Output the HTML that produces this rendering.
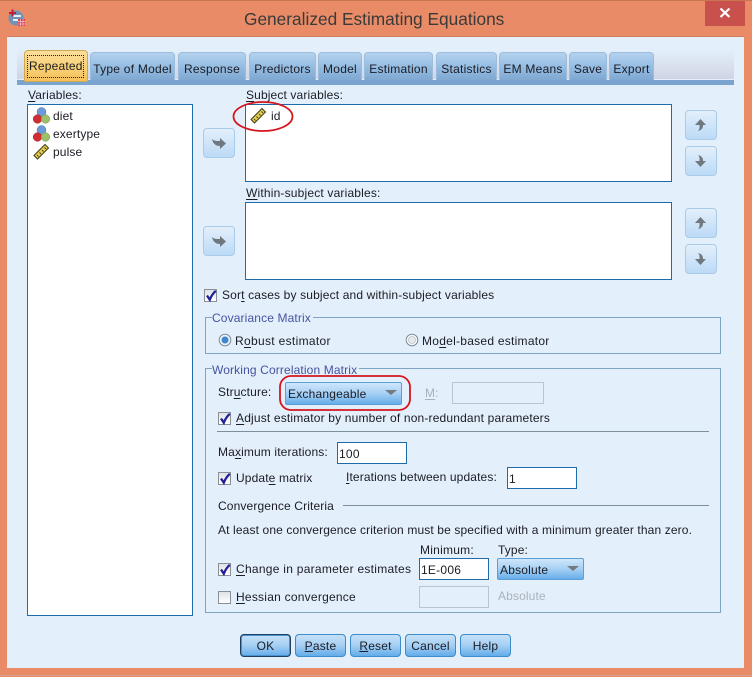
<!DOCTYPE html>
<html><head><meta charset="utf-8"><style>
html,body{margin:0;padding:0;width:752px;height:677px;overflow:hidden;background:#e98b66}
body{position:relative;font:12px/16px "Liberation Sans",Arial,sans-serif;color:#1c1c24}
.a,.t,.box,.btn,.tab,.cb,.in,.gb,.ln,.combo{position:absolute;box-sizing:border-box}
.t{white-space:nowrap;letter-spacing:.13px}
.t u{text-underline-offset:2px}
.box{background:#fff;border:1px solid #1f6aa8}
.in{background:#fff;border:1px solid #1f6aa8;padding:3px 0 0 1px;font-size:12px;line-height:16px;letter-spacing:.25px}
.in.d{border-color:#b8c6d2;background:#e3effb}
.tab{top:52px;height:28px;border:1px solid #9dbddc;border-bottom:0;border-radius:4px 4px 0 0;background:linear-gradient(#b4d2ef,#93bbe1 55%,#7fa8d2);text-align:center;padding-top:8px;white-space:nowrap;letter-spacing:.25px}
.btn{width:32px;height:30px;border:1px solid #a9cbea;border-radius:4px;background:linear-gradient(#e3effb,#bcdaf6)}
.btn svg{position:absolute;left:-1px;top:-1px}
.cb{width:13px;height:13px;border:1px solid #8a8f96;background:linear-gradient(#dfe2e6,#fff)}
.cb svg{position:absolute;left:0;top:0;overflow:visible}
.gb{border:1px solid #7ea6c2;left:205px;width:516px}
.ln{height:1px;background:#7d8f9c}
.lg{color:#46539f}
.combo{border:1px solid #5b9fd8;border-radius:2px;background:linear-gradient(#cfe6fb,#a6d0f4 50%,#66aeea);padding:3px 0 0 2px;letter-spacing:.2px}
.combo i{position:absolute;width:0;height:0;border:6px solid transparent;border-top:5px solid #757a7e;border-bottom:0;top:7px}
.pb{top:634px;height:23px;width:51px;border:1px solid #3c8bcb;border-radius:4px;background:linear-gradient(#c6e1f9,#a5cff3 50%,#62ace9);text-align:center;padding-top:3px;position:absolute;box-sizing:border-box;letter-spacing:.2px}
</style></head><body>

<div class="a" style="left:0;top:0;width:752px;height:1px;background:#c8764f"></div>

<svg class="a" style="left:8px;top:9px" width="18" height="18" viewBox="0 0 18 18">
<circle cx="8" cy="9" r="7.500" fill="#6f93b8"/><path d="M5 6h8v2H5zM5 10h5v2H5z" fill="#e6eef6"/>
<rect x="10" y="10" width="7" height="7" fill="#d84052"/><path d="M10 12.500h7M10 15h7M12.500 10v7M15 10v7" stroke="#f3c6c8" stroke-width=".7"/>
<path d="M1 4h7M4.500 .500v7" stroke="#c11f33" stroke-width="2"/></svg>

<div class="t" style="left:244px;top:7px;font-size:17.3px;line-height:24px;color:#3a3a3a;letter-spacing:0">Generalized Estimating Equations</div>
<div class="a" style="left:705px;top:1px;width:40px;height:25px;background:#c8504d"></div>
<svg class="a" style="left:719px;top:7px" width="13" height="12"><path d="M1.500 1.500l9 8.500M10.500 1.500l-9 8.500" stroke="#fff" stroke-width="2.200"/></svg>

<!-- client -->
<div class="a" style="left:7px;top:36px;width:737px;height:632px;background:#e3effb;border-top:1px solid #d07f5e"></div>
<div class="a" style="left:0;top:675px;width:752px;height:1px;background:#d4a58c"></div>

<!-- tab band -->
<div class="a" style="left:17px;top:50px;width:717px;height:29px;background:linear-gradient(#e3effb,#d0d4e4)"></div>
<div class="a" style="left:17px;top:80px;width:717px;height:5px;background:#7ba3cf"></div>

<div class="tab" style="left:90px;width:85px">Type of Model</div>
<div class="tab" style="left:178px;width:68px">Response</div>
<div class="tab" style="left:249px;width:67px">Predictors</div>
<div class="tab" style="left:318px;width:44px">Model</div>
<div class="tab" style="left:364px;width:69px">Estimation</div>
<div class="tab" style="left:436px;width:61px">Statistics</div>
<div class="tab" style="left:499px;width:68px">EM Means</div>
<div class="tab" style="left:569px;width:38px">Save</div>
<div class="tab" style="left:609px;width:45px">Export</div>
<div class="a" style="left:24px;top:50px;width:64px;height:32px;border:1px solid #cfa951;border-radius:4px 4px 0 0;background:linear-gradient(#fbdf9b,#f8cf73 60%,#f5c05a)"></div>
<div class="a" style="left:27px;top:55px;width:57px;height:23px;border:1px dotted #222"></div>
<div class="t" style="left:29px;top:58px;letter-spacing:.2px">Repeated</div>

<!-- variables -->
<div class="t" style="left:28px;top:87px"><u>V</u>ariables:</div>
<div class="box" style="left:27px;top:104px;width:166px;height:512px"></div>

<svg width="0" height="0" style="position:absolute"><defs>
<g id="nom"><circle cx="8.500" cy="5" r="4.500" fill="#6b9ad8" stroke="#4a76b0" stroke-width=".5"/><circle cx="4.500" cy="12" r="4.300" fill="#cf2f33" stroke="#9c2024" stroke-width=".5"/><circle cx="12.500" cy="12" r="4.300" fill="#9cc06a" stroke="#78984c" stroke-width=".5"/></g>
<g id="rul"><path d="M1 12.500L12 1.500l3.500 3.500L4.500 16z" fill="#e8cf4a" stroke="#3c3a20" stroke-width="1"/><path d="M4 12l1.500 1.500M6.500 9.500L8 11M9 7l1.500 1.500M11.500 4.500L13 6" stroke="#3c3a20" stroke-width=".9"/></g>
<path id="ar" d="M9 11C11 13 13 13 17 13V10L23 15.500 17 21V18C13 18 10 16 9 11Z" fill="#6f787f"/>
<path id="up" d="M15.500 9L21 15H18C18 18 17 20 13 21 15 19 14.500 17 14.500 15H10Z" fill="#6f787f"/>
<path id="dn" d="M13 9C17 10 18 12 18 15H21L15.500 21 10 15H14.500C14.500 13 15 11 13 9Z" fill="#6f787f"/>
<path id="chk" d="M2 5.500l2.800 4.200C6 6.500 7.800 3.500 10.800 .8" fill="none" stroke="#20209a" stroke-width="2.300"/>
</defs></svg>

<svg class="a" style="left:33px;top:107px" width="17" height="17"><use href="#nom"/></svg>
<div class="t" style="left:53px;top:108px">diet</div>
<svg class="a" style="left:33px;top:125px" width="17" height="17"><use href="#nom"/></svg>
<div class="t" style="left:53px;top:126px">exertype</div>
<svg class="a" style="left:33px;top:143px" width="17" height="17"><use href="#rul"/></svg>
<div class="t" style="left:53px;top:144px">pulse</div>

<!-- subject -->
<div class="t" style="left:246px;top:87px"><u>S</u>ubject variables:</div>
<div class="box" style="left:245px;top:104px;width:427px;height:78px"></div>
<svg class="a" style="left:250px;top:107px" width="17" height="17"><use href="#rul"/></svg>
<div class="t" style="left:271px;top:108px">id</div>
<div class="t" style="left:246px;top:185px;letter-spacing:.18px"><u>W</u>ithin-subject variables:</div>
<div class="box" style="left:245px;top:202px;width:427px;height:78px"></div>

<div class="btn" style="left:203px;top:128px"><svg width="32" height="30"><use href="#ar"/></svg></div>
<div class="btn" style="left:203px;top:226px"><svg width="32" height="30"><use href="#ar"/></svg></div>
<div class="btn" style="left:685px;top:110px"><svg width="32" height="30"><use href="#up"/></svg></div>
<div class="btn" style="left:685px;top:146px"><svg width="32" height="30"><use href="#dn"/></svg></div>
<div class="btn" style="left:685px;top:208px"><svg width="32" height="30"><use href="#up"/></svg></div>
<div class="btn" style="left:685px;top:244px"><svg width="32" height="30"><use href="#dn"/></svg></div>

<!-- sort -->
<div class="cb" style="left:204px;top:289px"><svg width="13" height="13"><use href="#chk"/></svg></div>
<div class="t" style="left:222px;top:287px;letter-spacing:.15px">Sor<u>t</u> cases by subject and within-subject variables</div>

<!-- covariance -->
<div class="gb" style="top:317px;height:37px"></div>
<div class="t lg" style="left:212px;top:310px;background:#e3effb;padding-right:2px">Covariance Matrix</div>
<svg class="a" style="left:218px;top:333px" width="14" height="14"><circle cx="7" cy="7" r="5.800" fill="#eef3f8" stroke="#7f8c96"/><circle cx="7" cy="7" r="3.500" fill="#3f86cf"/></svg>
<div class="t" style="left:235px;top:333px;letter-spacing:.32px">R<u>o</u>bust estimator</div>
<svg class="a" style="left:405px;top:333px" width="14" height="14"><circle cx="7" cy="7" r="5.800" fill="#f4f6f8" stroke="#7f8c96"/><circle cx="7" cy="7" r="3.500" fill="#e6e8ea" stroke="#aab2b8" stroke-width=".6"/></svg>
<div class="t" style="left:422px;top:333px;letter-spacing:.26px">Mo<u>d</u>el-based estimator</div>

<!-- working -->
<div class="gb" style="top:368px;height:245px"></div>
<div class="t lg" style="left:212px;top:362px;background:#e3effb;padding-right:2px">Working Correlation Matrix</div>
<div class="t" style="left:218px;top:384px">Str<u>u</u>cture:</div>
<div class="combo" style="left:285px;top:382px;width:117px;height:23px">Exchangeable<i style="left:99px"></i></div>
<div class="t" style="left:425px;top:385px;color:#a9b1ba"><u>M</u>:</div>
<div class="in d" style="left:452px;top:382px;width:92px;height:22px"></div>

<div class="cb" style="left:218px;top:412px"><svg width="13" height="13"><use href="#chk"/></svg></div>
<div class="t" style="left:236px;top:410px;letter-spacing:.17px"><u>A</u>djust estimator by number of non-redundant parameters</div>
<div class="ln" style="left:217px;top:431px;width:492px"></div>

<div class="t" style="left:218px;top:444px">Ma<u>x</u>imum iterations:</div>
<div class="in" style="left:337px;top:442px;width:70px;height:22px">100</div>
<div class="cb" style="left:218px;top:472px"><svg width="13" height="13"><use href="#chk"/></svg></div>
<div class="t" style="left:236px;top:470px">Updat<u>e</u> matrix</div>
<div class="t" style="left:346px;top:469px"><u>I</u>terations between updates:</div>
<div class="in" style="left:507px;top:467px;width:70px;height:22px">1</div>

<div class="t" style="left:218px;top:498px">Convergence Criteria</div>
<div class="ln" style="left:343px;top:505px;width:366px"></div>
<div class="t" style="left:218px;top:522px">At least one convergence criterion must be specified with a minimum greater than zero.</div>

<div class="t" style="left:420px;top:542px;letter-spacing:.25px">Minimum:</div>
<div class="t" style="left:498px;top:542px">Type:</div>
<div class="cb" style="left:218px;top:563px"><svg width="13" height="13"><use href="#chk"/></svg></div>
<div class="t" style="left:236px;top:561px;letter-spacing:.27px"><u>C</u>hange in parameter estimates</div>
<div class="in" style="left:419px;top:558px;width:70px;height:22px">1E-006</div>
<div class="combo" style="left:497px;top:558px;width:87px;height:22px">Absolute<i style="left:69px"></i></div>
<div class="cb" style="left:218px;top:591px"></div>
<div class="t" style="left:236px;top:589px;letter-spacing:.24px"><u>H</u>essian convergence</div>
<div class="in d" style="left:419px;top:586px;width:70px;height:22px"></div>
<div class="t" style="left:498px;top:588px;color:#a9b1ba">Absolute</div>

<!-- buttons -->
<div class="pb" style="left:240px;border:1px solid #1f3f60;box-shadow:inset 0 0 0 1px #4a93cf">OK</div>
<div class="pb" style="left:295px"><u>P</u>aste</div>
<div class="pb" style="left:350px"><u>R</u>eset</div>
<div class="pb" style="left:405px">Cancel</div>
<div class="pb" style="left:460px">Help</div>

<!-- red annotations -->
<svg class="a" style="left:0;top:0" width="752" height="677" fill="none">
<ellipse cx="263" cy="116.500" rx="29.500" ry="14.500" stroke="#d4161c" stroke-width="1.800"/>
<rect x="280" y="376" width="130" height="34" rx="11" stroke="#d4161c" stroke-width="1.800"/>
</svg>
</body></html>
